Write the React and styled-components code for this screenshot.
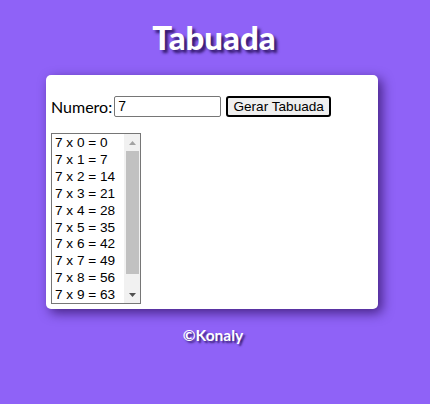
import React from "react";
import styled, { createGlobalStyle } from "styled-components";

const Global = createGlobalStyle`
  html, body { margin: 0; padding: 0; }
  body {
    background: #8f62f7;
    font-family: Lato, "Open Sans", sans-serif;
    min-height: 404px;
  }
`;

const Page = styled.div`
  display: flex;
  flex-direction: column;
  align-items: center;
  padding-top: 17px;
`;

const Title = styled.h1`
  margin: 0;
  font-family: Lato, sans-serif;
  font-weight: 900;
  font-size: 33px;
  line-height: 40px;
  color: #fff;
  text-shadow: 3px 3px 3px rgba(20, 0, 60, 0.75);
  transform: translateX(-1px);
`;

const Card = styled.div`
  margin-top: 18px;
  width: 332px;
  height: 234px;
  box-sizing: border-box;
  background: #fff;
  border-radius: 5px;
  box-shadow: 4px 4px 12px rgba(30, 0, 70, 0.65);
  padding: 21px 5px 0;
  transform: translateX(-3px);
`;

const Row = styled.div`
  display: flex;
  align-items: center;
  gap: 2px;
  height: 21px;
`;

const Label = styled.label`
  font-family: Lato, sans-serif;
  font-size: 16px;
  color: #000;
`;

const Input = styled.div`
  width: 107px;
  height: 21px;
  box-sizing: border-box;
  border: 1px solid #767676;
  border-radius: 2px;
  font-family: "Liberation Sans", Arial, sans-serif;
  font-size: 14px;
  line-height: 19px;
  padding-left: 3px;
  margin-right: 3px;
`;

const Button = styled.div`
  width: 105px;
  height: 21px;
  box-sizing: border-box;
  border: 2px solid #000;
  border-radius: 3px;
  background: #efefef;
  font-family: "Liberation Sans", Arial, sans-serif;
  font-size: 13.6px;
  display: flex;
  align-items: center;
  justify-content: center;
`;

const ListBox = styled.div`
  margin-top: 16px;
  width: 90px;
  height: 171px;
  box-sizing: border-box;
  border: 1px solid #767676;
  display: flex;
`;

const Options = styled.div`
  flex: 1;
  padding-top: 1px;
`;

const Option = styled.div`
  font-family: "Liberation Sans", Arial, sans-serif;
  font-size: 13.6px;
  line-height: 16.9px;
  padding-left: 3px;
  white-space: nowrap;
  color: #000;
`;

const Scrollbar = styled.div`
  width: 15px;
  background: #f1f1f1;
  display: flex;
  flex-direction: column;
  align-items: center;
  padding-left: 1px;
`;

const Arrow = styled.div`
  height: 17px;
  width: 100%;
  display: flex;
  align-items: center;
  justify-content: center;
`;

const Thumb = styled.div`
  width: 13px;
  height: 123px;
  background: #c1c1c1;
`;

const Spacer = styled.div`
  flex: 1;
`;

const Footer = styled.p`
  margin: 17px 0 0;
  font-family: Lato, sans-serif;
  font-weight: 700;
  font-size: 15.5px;
  color: #fff;
  text-shadow: 2px 2px 2px rgba(20, 0, 60, 0.7);
  transform: translateX(-2px);
`;

export default function App() {
  const n = 7;
  const rows = Array.from({ length: 10 }, (_, i) => `${n} x ${i} = ${n * i}`);
  return (
    <>
      <Global />
      <Page>
        <Title>Tabuada</Title>
        <Card>
          <Row>
            <Label>Numero:</Label>
            <Input>7</Input>
            <Button>Gerar Tabuada</Button>
          </Row>
          <ListBox>
            <Options>
              {rows.map((r) => (
                <Option key={r}>{r}</Option>
              ))}
            </Options>
            <Scrollbar>
              <Arrow>
                <svg width="7" height="4" viewBox="0 0 7 4">
                  <polygon points="0,4 7,4 3.5,0" fill="#a3a3a3" />
                </svg>
              </Arrow>
              <Thumb />
              <Spacer />
              <Arrow>
                <svg width="7" height="4" viewBox="0 0 7 4">
                  <polygon points="0,0 7,0 3.5,4" fill="#505050" />
                </svg>
              </Arrow>
            </Scrollbar>
          </ListBox>
        </Card>
        <Footer>©Konaly</Footer>
      </Page>
    </>
  );
}
